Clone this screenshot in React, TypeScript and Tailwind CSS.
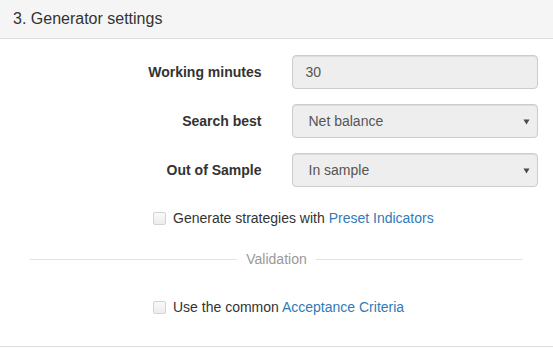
import React from 'react';

const FONT = { fontFamily: '"Liberation Sans", Arial, sans-serif' };

const Caret = () => (
    <svg width="7" height="6" viewBox="0 0 7 6" className="absolute right-[7px] top-[14px]">
        <path d="M0.5 0.5 L6.5 0.5 L3.5 5.5 Z" fill="#4a4a4a" />
    </svg>
);

interface FieldRowProps {
    label: string;
    value: string;
    select?: boolean;
}

const FieldRow: React.FC<FieldRowProps> = ({ label, value, select }) => (
    <div className="grid grid-cols-2 h-[34px]">
        <div className="flex items-center justify-end pr-[15px] text-[14px] font-bold text-[#333]">{label}</div>
        <div className="pl-[15px] pr-[15px]">
            <div className="relative h-[34px] rounded-[4px] border border-[#ccc] bg-[#eee] shadow-[inset_0_1px_1px_rgba(0,0,0,0.075)] flex items-center text-[14px] text-[#555]">
                <span className={select ? 'pl-[16px]' : 'pl-[13px]'}>{value}</span>
                {select && <Caret />}
            </div>
        </div>
    </div>
);

const CheckRow: React.FC<{ text: string; link: string }> = ({ text, link }) => (
    <div className="flex items-center h-[20px] pl-[153px] text-[14px] text-[#333]">
        <span className="w-[13px] h-[13px] mr-[7px] rounded-[2px] border border-[#d3d3d3] bg-gradient-to-b from-[#fafafa] to-[#ececec]" />
        <span>
            {text} <span className="text-[#337ab7]">{link}</span>
        </span>
    </div>
);

export default function App() {
    return (
        <div className="w-[553px] h-[348px] bg-white" style={FONT}>
            {/* Heading */}
            <div className="h-[39px] bg-[#f5f5f5] border-b border-[#ddd] flex items-center pl-[13px] text-[16px] text-[#333]">
                3. Generator settings
            </div>

            {/* Body */}
            <div className="pt-[16px] pb-[29px] border-b border-[#ddd] flex flex-col">
                <div className="flex flex-col gap-[15px]">
                    <FieldRow label="Working minutes" value="30" />
                    <FieldRow label="Search best" value="Net balance" select />
                    <FieldRow label="Out of Sample" value="In sample" select />
                </div>

                <div className="mt-[21px]">
                    <CheckRow text="Generate strategies with" link="Preset Indicators" />
                </div>

                <div className="mt-[21px] h-[20px] px-[30px] flex items-center text-[14px] text-[#999]">
                    <div className="flex-1 h-px bg-[#e3e3e3]" />
                    <span className="px-[9px]">Validation</span>
                    <div className="flex-1 h-px bg-[#e3e3e3]" />
                </div>

                <div className="mt-[28px]">
                    <CheckRow text="Use the common" link="Acceptance Criteria" />
                </div>
            </div>
        </div>
    );
}
